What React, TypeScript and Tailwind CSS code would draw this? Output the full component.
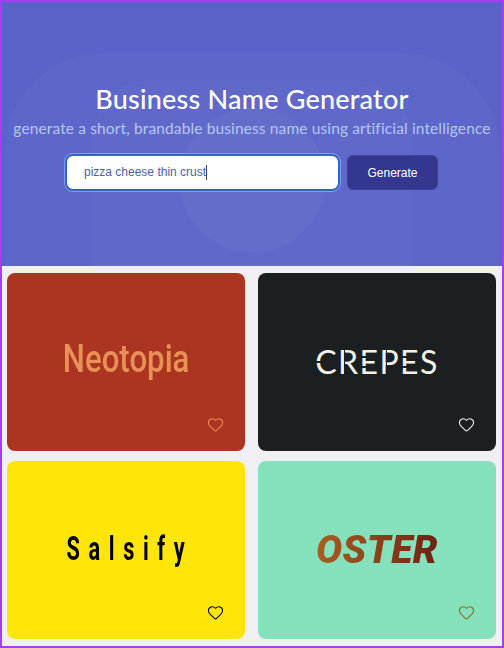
import React from 'react';
import { Heart } from 'lucide-react';

const Card = ({ bg, heart, children }: { bg: string; heart: string; children: React.ReactNode }) => (
  <div className={`relative h-[178px] rounded-[8px] flex items-center justify-center overflow-hidden ${bg}`}>
    {children}
    <Heart size={17} strokeWidth={1.5} className={`absolute right-[21px] bottom-[18px] ${heart}`} />
  </div>
);

const App: React.FC = () => {
  return (
    <div className="w-[504px] h-[648px] border-2 border-[#a63df0] bg-[#f0f0f4] overflow-hidden">
      {/* Hero */}
      <section className="relative h-[264px] bg-[#5a63c8] overflow-hidden flex flex-col items-center pt-[80px] font-['Lato',sans-serif]">
        <div className="absolute left-[3px] right-[2px] top-[51px] h-[300px] rounded-[100px] bg-white/[0.025]" />
        <div className="absolute left-[90px] right-[90px] top-[78px] h-[260px] rounded-[60px] bg-white/[0.025]" />
        <div className="absolute left-[178px] top-[106px] w-[145px] h-[145px] rounded-full bg-white/[0.03]" />

        <h1 className="relative text-[27px] leading-[34px] font-medium text-white tracking-[0.2px]">Business Name Generator</h1>
        <p className="relative text-[15.5px] leading-[22px] text-[#b4c6f5] tracking-[0.13px] whitespace-nowrap mt-[1px]">
          generate a short, brandable business name using artificial intelligence
        </p>
        <div className="relative flex items-center gap-[7px] mt-[15px] mr-[1px] font-['Liberation_Sans',sans-serif] text-[12px]">
          <div className="w-[275px] h-[37px] rounded-[8px] bg-white border-2 border-[#3562c4] outline outline-1 outline-[#7ea0ec] flex items-center pl-[17px] text-[#4f5fa8]">
            <span className="border-r border-[#34406f] leading-[15px]">pizza cheese thin crust</span>
          </div>
          <button className="w-[91px] h-[35px] rounded-[6px] bg-[#343790] border border-[#3f43a0] text-white">Generate</button>
        </div>
      </section>

      {/* Logo grid */}
      <section className="grid grid-cols-2 gap-x-[13px] gap-y-[10px] pl-[5px] pr-[6px] pt-[7px]">
        <Card bg="bg-[#ac3521]" heart="text-[#e89058]">
          <span className="font-['Roboto',sans-serif] font-medium text-[39px] leading-none text-[#e89058] scale-x-[0.8] -mt-[6px]">Neotopia</span>
        </Card>
        <Card bg="bg-[#1c1f22]" heart="text-[#f4f1e8]">
          <div className="relative">
            <span className="block font-['Lato',sans-serif] font-normal text-[32px] leading-none tracking-[1.4px] text-[#f4f1e8]">CREPES</span>
            {/* stencil cuts through the letters */}
            <div className="absolute left-0 top-[15px] w-[14px] h-[2px] bg-[#1c1f22]" />
            <div className="absolute left-[29px] top-0 w-[1px] h-[32px] bg-[#1c1f22]" />
            <div className="absolute left-[46px] top-[10px] w-[6px] h-[2px] bg-[#1c1f22]" />
            <div className="absolute left-[46px] top-[20px] w-[6px] h-[2px] bg-[#1c1f22]" />
            <div className="absolute left-[71px] top-0 w-[1px] h-[32px] bg-[#1c1f22]" />
            <div className="absolute left-[87px] top-[10px] w-[6px] h-[2px] bg-[#1c1f22]" />
            <div className="absolute left-[87px] top-[20px] w-[6px] h-[2px] bg-[#1c1f22]" />
          </div>
        </Card>
        <Card bg="bg-[#ffe608]" heart="text-black">
          <span className="font-['Roboto',sans-serif] font-bold text-[33px] leading-none tracking-[13px] -mr-[7px] text-black scale-x-[0.66] -mt-[4px]">Salsify</span>
        </Card>
        <Card bg="bg-[#85e1bc]" heart="text-[#8a6a30]">
          <span className="font-['Roboto',sans-serif] font-black italic text-[39px] leading-none tracking-[0.5px] bg-gradient-to-r from-[#a85f22] to-[#6e2212] bg-clip-text text-transparent">OSTER</span>
        </Card>
      </section>
    </div>
  );
};

export default App;
